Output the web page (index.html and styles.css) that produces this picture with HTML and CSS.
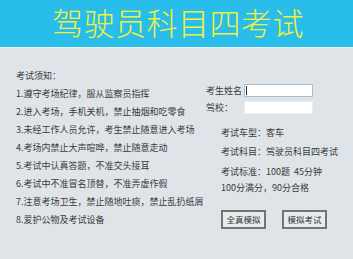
FILE: index.html
```html
<!DOCTYPE html>
<html lang="zh-CN">
<head>
<meta charset="utf-8">
<title>驾驶员科目四考试</title>
<link rel="stylesheet" href="styles.css">
</head>
<body>
<header class="header"><h1 class="title">驾驶员科目四考试</h1></header>
<main class="main">
  <section class="notice">
    <p>考试须知：</p>
    <p>1.遵守考场纪律，服从监察员指挥</p>
    <p>2.进入考场，手机关机，禁止抽烟和吃零食</p>
    <p>3.未经工作人员允许，考生禁止随意进入考场</p>
    <p>4.考场内禁止大声喧哗，禁止随意走动</p>
    <p>5.考试中认真答题，不准交头接耳</p>
    <p>6.考试中不准冒名顶替，不准弄虚作假</p>
    <p>7.注意考场卫生，禁止随地吐痰，禁止乱扔纸屑</p>
    <p>8.爱护公物及考试设备</p>
  </section>
  <section class="side">
    <div class="form">
      <div class="row"><span class="label">考生姓名</span><div class="field field-active"><span class="caret"></span></div></div>
      <div class="row"><span class="label">驾校：</span><div class="field"></div></div>
    </div>
    <div class="info">
      <p class="l1">考试车型：客车</p>
      <p class="l2">考试科目：驾驶员科目四考试</p>
      <p class="l3">考试标准：100题&nbsp;&nbsp;45分钟<br>100分满分，90分合格</p>
    </div>
    <div class="buttons">
      <button class="btn">全真模拟</button>
      <button class="btn">模拟考试</button>
    </div>
  </section>
</main>
</body>
</html>
```
FILE: styles.css
```css
html, body {
  margin: 0;
  padding: 0;
}
body {
  width: 353px;
  height: 259px;
  overflow: hidden;
  background: #dfe4e8;
  font-family: "Noto Sans CJK SC", "Noto Sans", sans-serif;
  color: #3a3a3a;
}
p { margin: 0; }
.header {
  height: 47px;
  background: #28bdeb;
  border-bottom: 1px solid #eef3f5;
  display: flex;
  justify-content: center;
  align-items: flex-start;
}
.title {
  margin: 0;
  padding-left: 3px;
  color: #eef23c;
  font-size: 31px;
  font-weight: 300;
  line-height: 44px;
  letter-spacing: 0.5px;
}
.main {
  display: flex;
}
.notice {
  width: 190px;
  padding: 19px 0 0 16px;
  font-size: 9px;
  line-height: 18px;
  white-space: nowrap;
}
.side {
  padding: 34px 0 0 0;
  font-size: 9px;
  display: flex;
  flex-direction: column;
}
.row {
  display: flex;
  align-items: center;
  height: 17px;
}
.label {
  width: 38px;
  white-space: nowrap;
}
.field {
  width: 66px;
  height: 11px;
  background: #fff;
  border: 1px solid #e9eef1;
  display: flex;
  align-items: center;
  padding-left: 1px;
}
.field-active {
  border-color: #a9bfc9;
}
.caret {
  width: 1px;
  height: 9px;
  background: #333;
}
.info {
  margin: 8px 0 0 15px;
  white-space: nowrap;
}
.l1 { line-height: 18px; }
.l2 { line-height: 19px; }
.l3 { line-height: 16px; margin-top: 3px; }
.buttons {
  display: flex;
  gap: 16px;
  margin: 14px 0 0 15px;
}
.btn {
  width: 45px;
  height: 19px;
  padding: 0;
  background: #e9ecee;
  border: 2px solid #747474;
  font-family: inherit;
  font-size: 8.5px;
  color: #333;
  line-height: 1;
}
```
